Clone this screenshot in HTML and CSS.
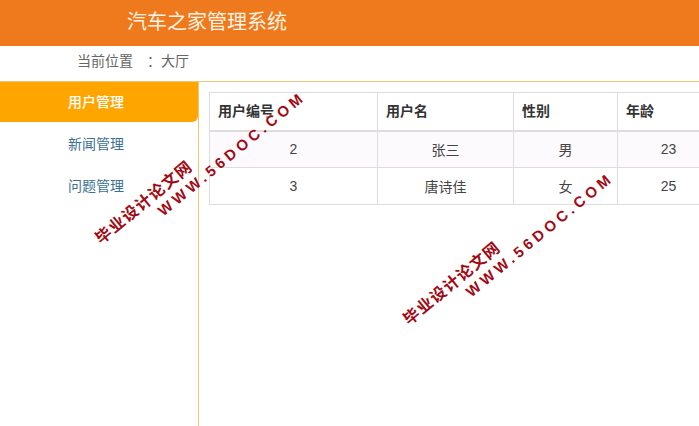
FILE: index.html
```html
<!DOCTYPE html>
<html lang="zh-CN">
<head>
  <meta charset="UTF-8">
  <meta name="viewport" content="width=device-width, initial-scale=1.0">
  <title>汽车之家管理系统</title>
  <link rel="stylesheet" href="styles.css">
</head>
<body>

  <div class="header">
    <h1>汽车之家管理系统</h1>
  </div>

  <div class="crumb">
    <span>当前位置</span>
    <span class="crumb-value">：大厅</span>
  </div>

  <div class="main">
    <ul class="menu">
      <li class="active">用户管理</li>
      <li>新闻管理</li>
      <li>问题管理</li>
    </ul>
    <div class="content">
      <table class="user-table">
        <thead>
          <tr>
            <th class="col-id">用户编号</th>
            <th class="col-name">用户名</th>
            <th class="col-sex">性别</th>
            <th class="col-age">年龄</th>
          </tr>
        </thead>
        <tbody>
          <tr class="odd">
            <td>2</td>
            <td>张三</td>
            <td>男</td>
            <td>23</td>
          </tr>
          <tr>
            <td>3</td>
            <td>唐诗佳</td>
            <td>女</td>
            <td>25</td>
          </tr>
        </tbody>
      </table>
    </div>
  </div>

  <!-- 水印 -->
  <div class="mark mark-one">
    <div class="mark-cn">毕业设计论文网</div>
    <div class="mark-url">WWW.56DOC.COM</div>
  </div>
  <div class="mark mark-two">
    <div class="mark-cn">毕业设计论文网</div>
    <div class="mark-url">WWW.56DOC.COM</div>
  </div>

</body>
</html>
```

FILE: styles.css
```css
* {
  box-sizing: border-box;
}

html, body {
  height: 100%;
}

body {
  margin: 0;
  font-family: "Liberation Sans", "Noto Sans CJK SC", sans-serif;
  font-size: 14px;
  color: #333;
  background: #fff;
  display: flex;
  flex-direction: column;
  overflow: hidden;
  position: relative;
}

.header {
  height: 46px;
  flex: none;
  background: #ee7a1d;
  padding: 0 0 5px 127px;
  display: flex;
  align-items: center;
}

.header h1 {
  margin: 0;
  font-size: 20px;
  font-weight: 400;
  color: #fdf3e4;
}

.crumb {
  height: 35px;
  flex: none;
  padding: 0 0 7px 77px;
  display: flex;
  align-items: center;
  font-size: 14px;
  color: #666;
}

.crumb-value {
  margin-left: 14px;
  font-family: "Liberation Sans", "Noto Sans CJK TC", sans-serif;
}

.main {
  flex: 1;
  display: flex;
  border-top: 1px solid #e8c77a;
  min-height: 0;
}

.menu {
  list-style: none;
  margin: 0;
  padding: 0;
  width: 199px;
  flex: none;
  border-right: 1px solid #e8c77a;
}

.menu li {
  height: 42px;
  padding-left: 68px;
  line-height: 40px;
  color: #3d7193;
}

.menu li.active {
  height: 40px;
  margin-bottom: 2px;
  background: #ffa500;
  color: #fff;
  border-radius: 0 0 6px 0;
  font-weight: 500;
}

.content {
  flex: 1;
  padding: 10px 0 0 10px;
}

.user-table {
  border-collapse: collapse;
  table-layout: fixed;
  width: 510px;
  font-size: 14px;
}

.col-id { width: 168px; }
.col-name { width: 136px; }
.col-sex { width: 104px; }
.col-age { width: 102px; }

.user-table th,
.user-table td {
  border: 1px solid #ddd;
  height: 37px;
  padding: 0 8px;
}

.user-table th {
  text-align: left;
  font-weight: 700;
  border-bottom-width: 2px;
  height: 38px;
  padding-bottom: 2px;
}

.user-table td {
  text-align: center;
  color: #444;
}

.user-table .odd td {
  background: #fdfafd;
}

/* watermark, free on top of the page */
.mark {
  position: absolute;
  width: 260px;
  transform: rotate(-39.5deg);
  transform-origin: 0 0;
  color: #a00a14;
  font-weight: 700;
  text-shadow: 0 0 2px #fff;
  white-space: nowrap;
}

.mark-one {
  left: 92px;
  top: 234px;
}

.mark-two {
  left: 400px;
  top: 315px;
}

.mark-cn {
  font-size: 16px;
  line-height: 18px;
  letter-spacing: 1.2px;
}

.mark-url {
  font-size: 15px;
  line-height: 18px;
  letter-spacing: 3.9px;
  margin-left: 66px;
}
```
